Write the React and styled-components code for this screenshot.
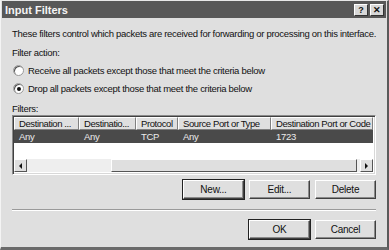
import React from "react";
import styled, { createGlobalStyle } from "styled-components";

const Global = createGlobalStyle`
  body {
    margin: 0;
    background: #dcdcdc;
    font-family: "Liberation Sans", Arial, sans-serif;
    font-size: 9.5px;
    letter-spacing: -0.3px;
    color: #111;
  }
`;

const Window = styled.div`
  width: 389px;
  height: 250px;
  box-sizing: border-box;
  overflow: hidden;
  background: #dfdfdf;
  border-top: 1px solid #e8e8e8;
  border-left: 1px solid #f4f4f4;
  border-right: 2px solid #5a5a5a;
  border-bottom: 3px solid #6a6a6a;
  padding: 0 1px;
  display: flex;
  flex-direction: column;
`;

const TitleBar = styled.div`
  height: 17px;
  background: #585858;
  display: flex;
  align-items: center;
  padding: 0 2px 0 3px;
  color: #f4f4f4;
  font-weight: bold;
  font-size: 11px;
  letter-spacing: 0;
`;

const Title = styled.div`
  flex: 1;
`;

const CaptionButton = styled.div`
  width: 12px;
  height: 10px;
  margin-left: ${(p) => (p.$gap ? "2px" : "0")};
  background: #d8d8d8;
  border-top: 1px solid #fff;
  border-left: 1px solid #fff;
  border-right: 1px solid #333;
  border-bottom: 1px solid #333;
  color: #111;
  font-size: 9px;
  line-height: 10px;
  text-align: center;
  font-weight: bold;
`;

const Body = styled.div`
  flex: 1;
  display: flex;
  flex-direction: column;
  padding: 0 10px 0 10px;
`;

const Text = styled.div`
  height: 13px;
  line-height: 13px;
  margin-top: ${(p) => p.$mt || 0}px;
  white-space: nowrap;
`;

const RadioRow = styled.div`
  display: flex;
  align-items: center;
  height: 13px;
  margin-top: ${(p) => p.$mt || 0}px;
  gap: 4px;
  padding-left: 1px;
`;

const RadioCircle = styled.span`
  width: 9px;
  height: 9px;
  border-radius: 50%;
  background: #fff;
  border: 1px solid #9a9a9a;
  box-shadow: inset 1px 1px 0 #555;
  position: relative;
  &::after {
    content: "";
    display: ${(p) => (p.$on ? "block" : "none")};
    position: absolute;
    left: 3px;
    top: 3px;
    width: 4px;
    height: 4px;
    border-radius: 50%;
    background: #111;
  }
`;

const ListBox = styled.div`
  height: 55px;
  background: #fff;
  border-top: 1px solid #8a8a8a;
  border-left: 1px solid #8a8a8a;
  border-right: 1px solid #fff;
  border-bottom: 1px solid #fff;
  box-shadow: inset 1px 1px 0 #404040, inset -1px -1px 0 #d8d8d8;
  padding: 1px 2px 2px 1px;
  display: flex;
  flex-direction: column;
`;

const Row = styled.div`
  display: grid;
  grid-template-columns: 65px 57px 42px 93px 1fr;
  height: ${(p) => p.$h}px;
  line-height: ${(p) => p.$h}px;
  background: ${(p) => (p.$sel ? "#4a4a4a" : "transparent")};
  color: ${(p) => (p.$sel ? "#ececec" : "#111")};
`;

const HeadCell = styled.div`
  background: #dfdfdf;
  border-top: 1px solid #fff;
  border-left: 1px solid #fff;
  border-right: 1px solid #808080;
  border-bottom: 1px solid #808080;
  padding-left: 4px;
  line-height: 12px;
  letter-spacing: -0.4px;
  white-space: nowrap;
  overflow: hidden;
`;

const Cell = styled.div`
  padding-left: 5px;
  white-space: nowrap;
`;

const Spacer = styled.div`
  flex: 1;
`;

const ScrollBar = styled.div`
  height: 13px;
  display: flex;
  background: #eeeeee;
`;

const ArrowButton = styled.div`
  width: 11px;
  height: 11px;
  background: #dfdfdf;
  border-top: 1px solid #fff;
  border-left: 1px solid #fff;
  border-right: 1px solid #555;
  border-bottom: 1px solid #555;
  display: flex;
  align-items: center;
  justify-content: center;
`;

const Thumb = styled.div`
  margin-left: ${(p) => p.$left}px;
  flex: 1;
  margin-right: 3px;
  background: #dfdfdf;
  border-top: 1px solid #fff;
  border-left: 1px solid #fff;
  border-right: 1px solid #555;
  border-bottom: 1px solid #555;
`;

const Arrow = styled.span`
  width: 0;
  height: 0;
  border-top: 3px solid transparent;
  border-bottom: 3px solid transparent;
  ${(p) => (p.$dir === "left" ? "border-right: 3px solid #111;" : "border-left: 3px solid #111;")}
`;

const ButtonRow = styled.div`
  display: flex;
  justify-content: flex-end;
  gap: 5px;
  margin-top: ${(p) => p.$mt}px;
`;

const Button = styled.button`
  width: 61px;
  height: 19px;
  box-sizing: border-box;
  padding: 0;
  font-family: inherit;
  font-size: 10px;
  letter-spacing: -0.25px;
  color: #111;
  background: #dfdfdf;
  border-top: 1px solid #fff;
  border-left: 1px solid #fff;
  border-right: 1px solid #404040;
  border-bottom: 1px solid #404040;
  box-shadow: ${(p) =>
    p.$default
      ? "0 0 0 1px #222, inset -1px -1px 0 #8a8a8a"
      : "inset -1px -1px 0 #8a8a8a"};
`;

const Separator = styled.div`
  margin-top: 10px;
  border-top: 1px solid #9a9a9a;
  border-bottom: 1px solid #fff;
`;

const columns = [
  "Destination ...",
  "Destinatio...",
  "Protocol",
  "Source Port or Type",
  "Destination Port or Code",
];
const filters = [["Any", "Any", "TCP", "Any", "1723"]];

export default function App() {
  return (
    <>
      <Global />
      <Window>
        <TitleBar>
          <Title>Input Filters</Title>
          <CaptionButton>?</CaptionButton>
          <CaptionButton $gap>✕</CaptionButton>
        </TitleBar>
        <Body>
          <Text $mt={9}>
            These filters control which packets are received for forwarding or processing on this interface.
          </Text>
          <Text $mt={6}>Filter action:</Text>
          <RadioRow $mt={5}>
            <RadioCircle />
            Receive all packets except those that meet the criteria below
          </RadioRow>
          <RadioRow $mt={5}>
            <RadioCircle $on />
            Drop all packets except those that meet the criteria below
          </RadioRow>
          <Text $mt={7}>Filters:</Text>
          <ListBox>
            <Row $h={13}>
              {columns.map((c) => (
                <HeadCell key={c}>{c}</HeadCell>
              ))}
            </Row>
            {filters.map((f, i) => (
              <Row key={i} $h={13} $sel>
                {f.map((v, j) => (
                  <Cell key={j}>{v}</Cell>
                ))}
              </Row>
            ))}
            <Spacer />
            <ScrollBar>
              <ArrowButton>
                <Arrow $dir="left" />
              </ArrowButton>
              <Thumb $left={84} />
              <ArrowButton>
                <Arrow $dir="right" />
              </ArrowButton>
            </ScrollBar>
          </ListBox>
          <ButtonRow $mt={5}>
            <Button $default>New...</Button>
            <Button>Edit...</Button>
            <Button>Delete</Button>
          </ButtonRow>
          <Separator />
          <ButtonRow $mt={9}>
            <Button $default>OK</Button>
            <Button>Cancel</Button>
          </ButtonRow>
        </Body>
      </Window>
    </>
  );
}
